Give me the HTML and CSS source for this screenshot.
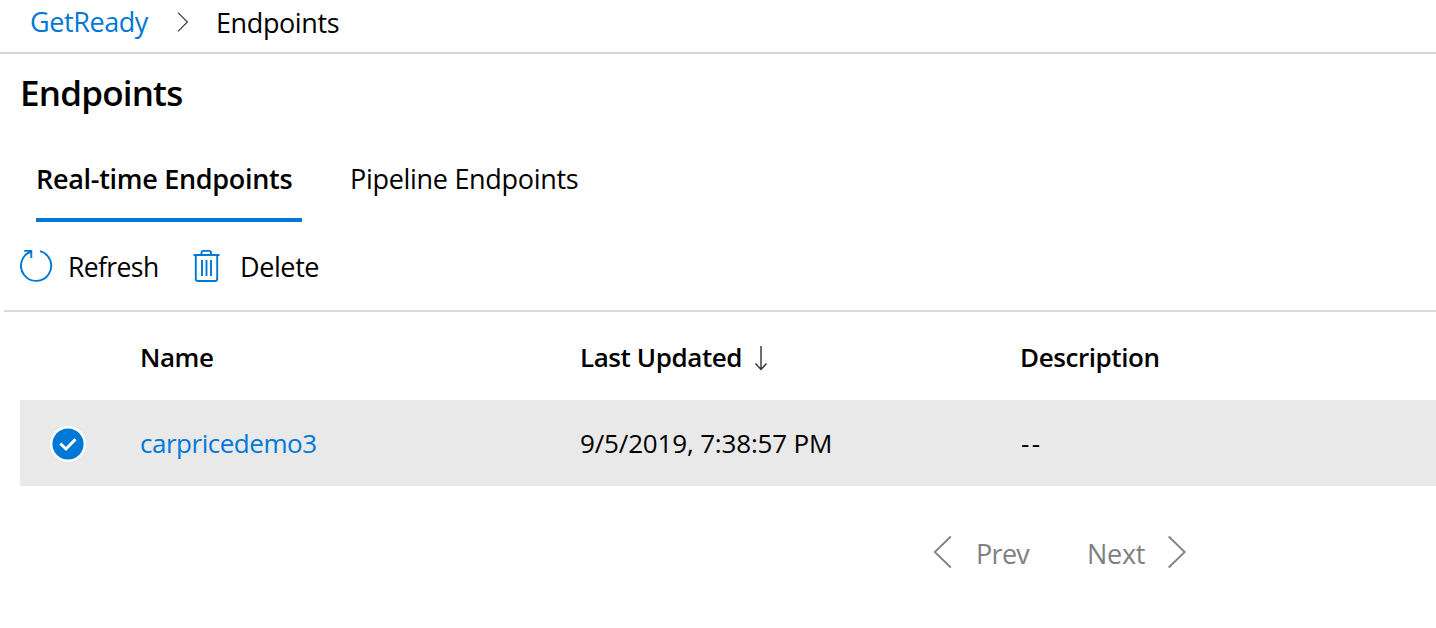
FILE: index.html
```html
<!DOCTYPE html>
<html lang="en">
<head>
<meta charset="utf-8">
<title>Endpoints</title>
<link rel="stylesheet" href="styles.css">
</head>
<body>
<nav class="breadcrumb">
  <a class="crumb-link">GetReady</a>
  <svg class="crumb-chevron" width="12" height="20" viewBox="0 0 12 20"><path d="M1 .6 10.4 10 1 19.4"/></svg>
  <span class="crumb-current">Endpoints</span>
</nav>
<h1 class="title">Endpoints</h1>
<div class="tabs">
  <a class="tab tab-active">Real-time Endpoints</a>
  <a class="tab tab-pipeline">Pipeline Endpoints</a>
</div>
<div class="toolbar">
  <svg class="icon" width="34" height="34" viewBox="0 0 34 34"><path d="M20 2.2A15.1 15.1 0 1 1 11.2 2.5M4.2 1.9H11.3V8.9"/></svg>
  <span class="refresh">Refresh</span>
  <svg class="icon trash" width="28" height="34" viewBox="0 0 28 34"><path d="M.5 6H26.5M2.8 6V29.7Q2.8 32 5.1 32H21.9Q24.2 32 24.2 29.7V6M8.5 5.5V3.8Q8.5 1.9 10.3 1.9H16.2Q18 1.9 18 3.8V5.5M9 11V27M13.5 11V27M18 11V27"/></svg>
  <span class="delete">Delete</span>
</div>
<div class="table">
  <div class="row head">
    <span></span>
    <span class="h-name">Name</span>
    <span class="h-updated">Last Updated<svg class="sort" width="14" height="26" viewBox="0 0 14 26"><path d="M7 1V24.5M1.5 18.5 7 24.5 12.5 18.5"/></svg></span>
    <span class="h-desc">Description</span>
  </div>
  <div class="row selected">
    <svg class="check" width="36" height="36" viewBox="0 0 36 36"><circle class="ring" cx="18" cy="18" r="18"/><circle class="disc" cx="18" cy="18" r="15.6"/><path d="M10.3 17.5 16 23 25.5 13.2"/></svg>
    <a class="c-name">carpricedemo3</a>
    <span class="c-date">9/5/2019, 7:38:57 PM</span>
    <span class="c-desc">--</span>
  </div>
</div>
<div class="pager">
  <svg class="arrow" width="20" height="34" viewBox="0 0 20 34"><path d="M18.8 1.5 2.8 17 18.8 32.5"/></svg>
  <span class="prev">Prev</span>
  <span class="next">Next</span>
  <svg class="arrow" width="20" height="34" viewBox="0 0 20 34"><path d="M1.7 1.5 17.7 17 1.7 32.5"/></svg>
</div>
</body>
</html>
```
FILE: styles.css
```css
* { box-sizing: border-box; }
body { margin: 0; background: #fff; color: #000; font: 27px/40px "Open Sans", "Noto Sans", sans-serif; letter-spacing: -.3px; overflow: hidden; height: 628px; white-space: nowrap; }
svg { fill: none; flex: none; display: block; }
.breadcrumb { display: flex; height: 54px; border-bottom: 2px solid #d4d4d4; padding: 2px 0 0 30px; }
.crumb-link { width: 147px; color: #0078d7; letter-spacing: -.42px; }
.crumb-chevron { margin-top: 10px; stroke: #444; stroke-width: 1.3; }
.crumb-current { margin-left: 25px; padding: 1px 0 0 2px; letter-spacing: -.4px; }
.title { margin: 0; padding: 15px 0 0 20px; height: 94px; font-size: 35px; line-height: 48px; font-weight: 600; letter-spacing: -.8px; }
.tabs { display: flex; height: 74px; padding-left: 36px; }
.tab { height: 74px; padding-top: 11px; }
.tab-active { width: 266px; border-bottom: 4px solid #0078d7; font-weight: 600; }
.tab-pipeline { margin-left: 48px; }
.toolbar { display: flex; height: 88px; padding: 25px 0 0 20px; }
.icon { margin-top: 2px; stroke: #0078d7; stroke-width: 1.9; }
.refresh { margin-left: 14px; width: 88px; font-size: 26.5px; letter-spacing: -.6px; }
.trash { margin-left: 37px; }
.delete { margin-left: 19px; letter-spacing: -.4px; }
.table { margin-left: 4px; border-top: 2px solid #dadada; padding-left: 16px; font-size: 26px; }
.row { display: grid; grid-template-columns: 120px 440px 440px 1fr; height: 86px; align-items: center; }
.head { height: 88px; padding-top: 2px; font-weight: 600; letter-spacing: -.42px; }
.h-updated { display: flex; align-items: center; }
.sort { margin: 2px 0 0 12px; stroke: #333; stroke-width: 1.4; }
.selected { background: #e9e9e9; }
.check { margin: 2px 0 0 30px; stroke: #fff; stroke-width: 3; }
.ring { fill: #fff; stroke: none; }
.disc { fill: #0078d7; stroke: none; }
.c-name { color: #0078d7; letter-spacing: -.48px; }
.c-date { letter-spacing: -.16px; }
.c-desc { letter-spacing: 2.4px; padding-left: 1px; }
.pager { display: flex; padding: 48px 0 0 932px; color: #808080; }
.arrow { stroke: #808080; stroke-width: 1.8; margin-top: 1px; }
.prev { margin-left: 24px; width: 111px; letter-spacing: -.7px; }
.next { width: 80px; }
```
